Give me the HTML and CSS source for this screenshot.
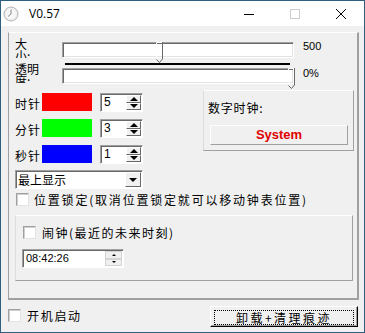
FILE: index.html
```html
<!DOCTYPE html>
<html lang="zh-CN">
<head>
    <meta charset="UTF-8">
    <meta name="viewport" content="width=device-width, initial-scale=1.0">
    <title>V0.57</title>
    <link rel="stylesheet" href="styles.css">
</head>
<body>
    <div class="window">
        <!-- Title bar -->
        <div class="titlebar">
            <svg class="app-icon" viewBox="0 0 16 16">
                <circle cx="8" cy="8" r="7" fill="#ececec" stroke="#b4b4b4" stroke-width="1"/>
                <circle cx="8" cy="8" r="5.5" fill="#f6f6f6"/>
                <path d="M8 3.5 V8 L5 10.5" fill="none" stroke="#8c8c8c" stroke-width="1"/>
            </svg>
            <span class="title">V0.57</span>
            <div class="controls">
                <span class="ctl">
                    <svg width="10" height="10" viewBox="0 0 10 10"><path d="M0 5.5 H10" stroke="#000" stroke-width="1"/></svg>
                </span>
                <span class="ctl">
                    <svg width="10" height="10" viewBox="0 0 10 10"><rect x="0.5" y="0.5" width="9" height="9" fill="none" stroke="#cccccc" stroke-width="1"/></svg>
                </span>
                <span class="ctl">
                    <svg width="10" height="10" viewBox="0 0 10 10"><path d="M0 0 L10 10 M10 0 L0 10" stroke="#000" stroke-width="1"/></svg>
                </span>
            </div>
        </div>

        <!-- Main panel -->
        <div class="panel">
            <div class="sliders">
                <div class="slider-row">
                    <div class="slabel">大<br>小:</div>
                    <div class="track">
                        <svg class="thumb" style="left: 93px" viewBox="0 0 7 21">
                            <path d="M0.5 17 V0.5 H6" fill="none" stroke="#fff"/>
                            <path d="M6.5 0 V17 L3.5 20.5 L0.5 17.5" fill="none" stroke="#696969"/>
                        </svg>
                    </div>
                    <span class="value">500</span>
                </div>
                <div class="mark"></div>
                <div class="slider-row second">
                    <div class="slabel">透明<br>度:</div>
                    <div class="track">
                        <svg class="thumb" style="left: 225px" viewBox="0 0 7 21">
                            <path d="M0.5 17 V0.5 H6" fill="none" stroke="#fff"/>
                            <path d="M6.5 0 V17 L3.5 20.5 L0.5 17.5" fill="none" stroke="#696969"/>
                        </svg>
                    </div>
                    <span class="value">0%</span>
                </div>
            </div>

            <div class="middle">
                <div class="colors">
                    <div class="color-row">
                        <span class="clabel">时针</span>
                        <span class="swatch red"></span>
                        <div class="spin">
                            <span class="spin-val">5</span>
                            <span class="spin-btns"><span class="sb"><i class="up"></i></span><span class="sb"><i class="down"></i></span></span>
                        </div>
                    </div>
                    <div class="color-row">
                        <span class="clabel">分针</span>
                        <span class="swatch green"></span>
                        <div class="spin">
                            <span class="spin-val">3</span>
                            <span class="spin-btns"><span class="sb"><i class="up"></i></span><span class="sb"><i class="down"></i></span></span>
                        </div>
                    </div>
                    <div class="color-row">
                        <span class="clabel">秒针</span>
                        <span class="swatch blue"></span>
                        <div class="spin">
                            <span class="spin-val">1</span>
                            <span class="spin-btns"><span class="sb"><i class="up"></i></span><span class="sb"><i class="down"></i></span></span>
                        </div>
                    </div>
                    <div class="select">
                        <span class="select-val">最上显示</span>
                        <span class="drop-btn"><i class="down"></i></span>
                    </div>
                </div>
                <div class="digital">
                    <div class="dlabel">数字时钟:</div>
                    <div class="sys-btn">System</div>
                </div>
            </div>

            <div class="check-row lock">
                <span class="box"></span>
                <span class="ctext">位置锁定(取消位置锁定就可以移动钟表位置)</span>
            </div>

            <div class="alarm">
                <div class="check-row">
                    <span class="box"></span>
                    <span class="ctext wide">闹钟(最近的未来时刻)</span>
                </div>
                <div class="time-edit">
                    <span class="time-val">08:42:26</span>
                    <span class="time-btns"><span class="tb"><i class="up small"></i></span><span class="tb"><i class="down small"></i></span></span>
                </div>
            </div>
        </div>

        <!-- Footer -->
        <div class="footer">
            <div class="check-row boot">
                <span class="box"></span>
                <span class="ctext">开机启动</span>
            </div>
            <div class="main-btn"><span class="focus">卸载+清理痕迹</span></div>
        </div>
    </div>
</body>
</html>
```

FILE: styles.css
```css
body {
    margin: 0;
    padding: 0;
    background: #f0f0f0;
}

.window {
    width: 365px;
    height: 333px;
    box-sizing: border-box;
    border: 1px solid #2f5f80;
    background: #f0f0f0;
    font-family: "Noto Sans CJK SC", sans-serif;
    font-size: 12px;
    color: #000;
    overflow: hidden;
}

/* Title bar */
.titlebar {
    height: 25px;
    background: #fff;
    display: flex;
    align-items: center;
}

.app-icon {
    width: 16px;
    height: 16px;
    margin-left: 2px;
}

.title {
    margin-left: 10px;
    font-family: "Open Sans", sans-serif;
    font-size: 12px;
}

.controls {
    margin-left: auto;
    height: 100%;
    display: flex;
}

.ctl {
    width: 46px;
    display: flex;
    align-items: center;
    justify-content: center;
}

/* Main panel */
.panel {
    margin: 6px 0 0 7px;
    width: 351px;
    height: 268px;
    box-sizing: border-box;
    border-top: 1px solid #fff;
    border-left: 1px solid #a0a0a0;
    border-right: 2px solid #a0a0a0;
    border-bottom: 2px solid #a0a0a0;
}

.sliders {
    padding: 5px 0 0 6px;
}

.slider-row {
    display: flex;
    align-items: flex-start;
    height: 25px;
}

.slider-row.second {
    height: 26px;
}

.slabel {
    width: 47px;
    height: 20px;
    line-height: 12px;
    overflow: hidden;
}

.slider-row.second .slabel {
    margin-top: -2px;
}

.track {
    position: relative;
    margin-top: 4px;
    width: 232px;
    height: 16px;
    box-sizing: border-box;
    background: #fff;
    border-top: 1px solid #a0a0a0;
    border-left: 1px solid #a0a0a0;
    border-right: 1px solid #fff;
    border-bottom: 1px solid #fff;
    box-shadow: inset 1px 1px 0 #696969, inset -1px -1px 0 #e3e3e3;
}

.slider-row.second .track {
    margin-top: 3px;
}

.thumb {
    position: absolute;
    top: -1px;
    width: 7px;
    height: 21px;
}

.value {
    margin-left: 9px;
    margin-top: 2px;
    font-family: "Liberation Sans", Arial, sans-serif;
    font-size: 11px;
    line-height: 13px;
}

.mark {
    margin-left: 50px;
    width: 225px;
    height: 2px;
    background: #000;
}

/* Colours and digital clock */
.middle {
    display: flex;
    align-items: flex-start;
    margin-top: 2px;
    padding-left: 6px;
}

.colors {
    width: 128px;
    display: flex;
    flex-direction: column;
    gap: 7px;
}

.color-row {
    display: flex;
    height: 19px;
}

.clabel {
    width: 27px;
    padding-top: 5px;
    line-height: 12px;
    letter-spacing: 1px;
}

.swatch {
    width: 50px;
    height: 18px;
}

.red { background: #ff0000; }
.green { background: #00ff00; }
.blue { background: #0000ff; }

.spin {
    margin-left: 8px;
    width: 43px;
    height: 19px;
    box-sizing: border-box;
    display: flex;
    background: #fff;
    border-top: 1px solid #a0a0a0;
    border-left: 1px solid #a0a0a0;
    border-right: 1px solid #fff;
    border-bottom: 1px solid #fff;
    box-shadow: inset 1px 1px 0 #696969;
}

.spin-val {
    flex: 1;
    padding: 1px 0 0 3px;
    font-family: "Liberation Sans", Arial, sans-serif;
    font-size: 12px;
    line-height: 14px;
}

.spin-btns {
    width: 15px;
    display: flex;
    flex-direction: column;
    padding: 1px 1px 1px 0;
}

.sb {
    flex: 1;
    display: flex;
    align-items: center;
    justify-content: center;
    background: #f0f0f0;
    border-top: 1px solid #fff;
    border-left: 1px solid #fff;
    border-right: 1px solid #696969;
    border-bottom: 1px solid #696969;
}

.up {
    width: 0;
    height: 0;
    border-left: 4px solid transparent;
    border-right: 4px solid transparent;
    border-bottom: 4px solid #000;
}

.down {
    width: 0;
    height: 0;
    border-left: 4px solid transparent;
    border-right: 4px solid transparent;
    border-top: 4px solid #000;
}

.up.small {
    border-left-width: 2px;
    border-right-width: 2px;
    border-bottom-width: 2px;
}

.down.small {
    border-left-width: 2px;
    border-right-width: 2px;
    border-top-width: 2px;
}

.select {
    margin-top: -1px;
    width: 128px;
    height: 19px;
    box-sizing: border-box;
    display: flex;
    background: #fff;
    border-top: 1px solid #a0a0a0;
    border-left: 1px solid #a0a0a0;
    border-right: 1px solid #fff;
    border-bottom: 1px solid #fff;
    box-shadow: inset 1px 1px 0 #696969;
}

.select-val {
    flex: 1;
    padding: 2px 0 0 2px;
    line-height: 13px;
}

.drop-btn {
    width: 14px;
    margin: 1px 1px 1px 0;
    display: flex;
    align-items: center;
    justify-content: center;
    background: #f0f0f0;
    border-top: 1px solid #fff;
    border-left: 1px solid #fff;
    border-right: 1px solid #696969;
    border-bottom: 1px solid #696969;
}

.digital {
    margin-left: 60px;
    margin-top: -3px;
    width: 151px;
    height: 61px;
    box-sizing: border-box;
    border-top: 1px solid #fff;
    border-left: 1px solid #dcdcdc;
    border-right: 1px solid #a0a0a0;
    border-bottom: 1px solid #a0a0a0;
}

.dlabel {
    padding: 11px 0 0 4px;
    line-height: 12px;
    letter-spacing: 0.8px;
}

.sys-btn {
    margin: 11px 0 0 6px;
    width: 138px;
    height: 20px;
    box-sizing: border-box;
    border-top: 1px solid #fff;
    border-left: 1px solid #fff;
    border-right: 1px solid #a0a0a0;
    border-bottom: 1px solid #a0a0a0;
    text-align: center;
    font-family: "Liberation Sans", Arial, sans-serif;
    font-weight: bold;
    font-size: 13px;
    line-height: 18px;
    color: #e00000;
}

/* Checkboxes */
.check-row {
    display: flex;
    align-items: center;
    height: 13px;
}

.check-row.lock {
    margin: 4px 0 0 7px;
}

.box {
    width: 13px;
    height: 13px;
    box-sizing: border-box;
    background: #fff;
    border-top: 1px solid #a0a0a0;
    border-left: 1px solid #a0a0a0;
    border-right: 1px solid #e3e3e3;
    border-bottom: 1px solid #e3e3e3;
    box-shadow: inset 1px 1px 0 #cfcfcf;
}

.ctext {
    margin-left: 5px;
    line-height: 13px;
    letter-spacing: 1.8px;
    white-space: nowrap;
}

.ctext.wide {
    margin-left: 6px;
    letter-spacing: 1.5px;
}

/* Alarm */
.alarm {
    margin: 9px 0 0 6px;
    width: 338px;
    height: 66px;
    box-sizing: border-box;
    border-top: 1px solid #fff;
    border-left: 1px solid #dcdcdc;
    border-right: 1px solid #a0a0a0;
    border-bottom: 1px solid #a0a0a0;
    padding-top: 10px;
}

.alarm .check-row {
    margin-left: 7px;
}

.time-edit {
    margin: 10px 0 0 6px;
    width: 102px;
    height: 19px;
    box-sizing: border-box;
    display: flex;
    background: #fff;
    border-top: 1px solid #a0a0a0;
    border-left: 1px solid #a0a0a0;
    border-right: 1px solid #fff;
    border-bottom: 1px solid #fff;
    box-shadow: inset 1px 1px 0 #696969;
}

.time-val {
    flex: 1;
    padding: 2px 0 0 3px;
    font-family: "Liberation Sans", Arial, sans-serif;
    font-size: 11px;
    line-height: 13px;
}

.time-btns {
    width: 17px;
    display: flex;
    flex-direction: column;
    padding: 1px 1px 1px 0;
}

.tb {
    flex: 1;
    display: flex;
    align-items: center;
    justify-content: center;
    background: #f0f0f0;
    border: 1px solid #d4d4d4;
}

/* Footer */
.footer {
    display: flex;
    align-items: flex-start;
    margin-top: 6px;
    padding-left: 7px;
}

.check-row.boot {
    margin-top: 3px;
}

.check-row.boot .ctext {
    margin-left: 6px;
    letter-spacing: 1.7px;
}

.main-btn {
    margin: 0 6px 0 auto;
    width: 148px;
    height: 21px;
    box-sizing: border-box;
    padding: 3px;
    background: #f0f0f0;
    border-top: 1px solid #fff;
    border-left: 1px solid #fff;
    border-right: 1px solid #000;
    border-bottom: 1px solid #000;
    box-shadow: inset -1px -1px 0 #a0a0a0;
}

.focus {
    display: block;
    height: 13px;
    border: 1px dotted #000;
    text-align: center;
    line-height: 13px;
    letter-spacing: 2.5px;
}
```
